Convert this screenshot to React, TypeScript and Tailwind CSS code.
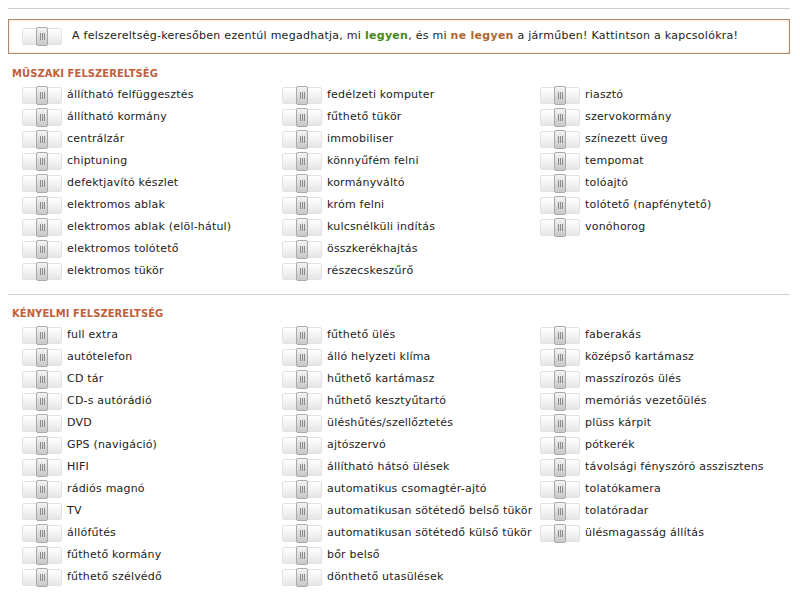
import React from "react";

const sec1: string[][] = [
  ["állítható felfüggesztés", "állítható kormány", "centrálzár", "chiptuning", "defektjavító készlet", "elektromos ablak", "elektromos ablak (elöl-hátul)", "elektromos tolótető", "elektromos tükör"],
  ["fedélzeti komputer", "fűthető tükör", "immobiliser", "könnyűfém felni", "kormányváltó", "króm felni", "kulcsnélküli indítás", "összkerékhajtás", "részecskeszűrő"],
  ["riasztó", "szervokormány", "színezett üveg", "tempomat", "tolóajtó", "tolótető (napfénytető)", "vonóhorog"],
];

const sec2: string[][] = [
  ["full extra", "autótelefon", "CD tár", "CD-s autórádió", "DVD", "GPS (navigáció)", "HIFI", "rádiós magnó", "TV", "állófűtés", "fűthető kormány", "fűthető szélvédő"],
  ["fűthető ülés", "álló helyzeti klíma", "hűthető kartámasz", "hűthető kesztyűtartó", "üléshűtés/szellőztetés", "ajtószervó", "állítható hátsó ülések", "automatikus csomagtér-ajtó", "automatikusan sötétedő belső tükör", "automatikusan sötétedő külső tükör", "bőr belső", "dönthető utasülések"],
  ["faberakás", "középső kartámasz", "masszírozós ülés", "memóriás vezetőülés", "plüss kárpit", "pótkerék", "távolsági fényszóró asszisztens", "tolatókamera", "tolatóradar", "ülésmagasság állítás"],
];

function Toggle() {
  return (
    <div className="relative w-[40px] h-[17px] shrink-0 border border-[#e2e2e2] rounded-[2px] bg-gradient-to-b from-[#ffffff] via-[#f3f3f3] to-[#e6e6e6]">
      <div className="absolute left-[13px] top-[-2px] w-[12px] h-[19px] rounded-[2px] border border-[#a9a9a9] bg-gradient-to-b from-[#f4f4f4] via-[#dcdcdc] to-[#c8c8c8] flex items-center justify-center gap-[1px]">
        <span className="block w-[1px] h-[7px] bg-[#8c8c8c]" />
        <span className="block w-[1px] h-[7px] bg-[#8c8c8c]" />
        <span className="block w-[1px] h-[7px] bg-[#8c8c8c]" />
      </div>
    </div>
  );
}

function Item({ label }: { label: string }) {
  return (
    <div className="flex items-center h-[22px]">
      <Toggle />
      <span className="ml-[5px] whitespace-nowrap tracking-[0.2px]">{label}</span>
    </div>
  );
}

function Section({ title, cols }: { title: string; cols: string[][] }) {
  return (
    <div>
      <div className="pl-[4px] h-[14px] leading-[14px] font-bold text-[#c0603a] text-[10px] tracking-[0.05px]">{title}</div>
      <div className="mt-[3px] pl-[14px] grid grid-cols-[260px_258px_1fr]">
        {cols.map((c, i) => (
          <div key={i} className="flex flex-col">
            {c.map((l) => (
              <Item key={l} label={l} />
            ))}
          </div>
        ))}
      </div>
    </div>
  );
}

export default function App() {
  return (
    <div
      className="w-[800px] h-[600px] bg-white text-[#222] text-[11px] overflow-hidden"
      style={{ fontFamily: '"DejaVu Sans", Verdana, sans-serif' }}
    >
      <div className="pl-[8px] pr-[10px] pt-[8px]">
        <div className="border-t border-[#cfcfcf]" />
        <div className="mt-[10px] h-[35px] border border-[#a98a6e] shadow-[inset_0_0_3px_rgba(240,190,140,0.6)] flex items-center pl-[13px]">
          <Toggle />
          <span className="ml-[10px] whitespace-nowrap tracking-[0.27px]">
            A felszereltség-keresőben ezentúl megadhatja, mi{" "}
            <b className="text-[#3e8a1e]">legyen</b>, és mi{" "}
            <b className="text-[#b0652e]">ne legyen</b> a járműben! Kattintson a kapcsolókra!
          </span>
        </div>
        <div className="mt-[13px]">
          <Section title="MŰSZAKI FELSZERELTSÉG" cols={sec1} />
        </div>
        <div className="mt-[12px] border-t border-[#cfcfcf]" />
        <div className="mt-[12px]">
          <Section title="KÉNYELMI FELSZERELTSÉG" cols={sec2} />
        </div>
      </div>
    </div>
  );
}
